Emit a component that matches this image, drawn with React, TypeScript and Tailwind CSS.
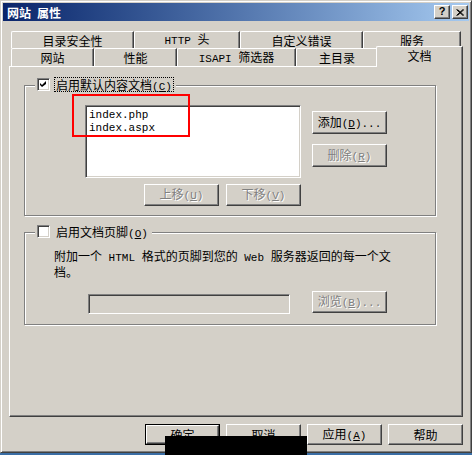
import type { ReactNode } from "react";

const mono = "font-['Liberation_Mono',monospace] text-[11px]";

// splits CJK and ascii runs so latin gets the narrow mono face
const Txt = ({ s }: { s: string }) => {
  const parts = s.match(/[\x00-\x7f]+|[^\x00-\x7f]+/g) ?? [];
  return (
    <>
      {parts.map((p, i) =>
        /^[\x00-\x7f]/.test(p) ? (
          <span key={i} className={mono}>
            {p}
          </span>
        ) : (
          <span key={i}>{p}</span>
        )
      )}
    </>
  );
};

const Key = ({ k, dots }: { k: string; dots?: boolean }) => (
  <span className={mono}>
    (<span className="underline">{k}</span>){dots ? "..." : ""}
  </span>
);

interface BtnProps {
  children: ReactNode;
  disabled?: boolean;
  isDefault?: boolean;
  size: string;
}

const Btn = ({ children, disabled, isDefault, size }: BtnProps) => {
  const face = (
    <div
      className={`flex h-full w-full items-center justify-center border border-t-white border-l-white border-r-[#404040] border-b-[#404040] shadow-[inset_-1px_-1px_0_#808080] ${
        disabled ? "text-[#808080] [text-shadow:1px_1px_0_#fff]" : "text-black"
      }`}
    >
      <span className="whitespace-nowrap">{children}</span>
    </div>
  );
  if (isDefault) {
    return <div className={`${size} shrink-0 border border-black`}>{face}</div>;
  }
  return <div className={`${size} shrink-0`}>{face}</div>;
};

const Check = ({ on }: { on?: boolean }) => (
  <div className="h-[13px] w-[13px] shrink-0 border border-t-[#808080] border-l-[#808080] border-r-white border-b-white bg-white shadow-[inset_1px_1px_0_#404040,inset_-1px_-1px_0_#d4d0c8]">
    {on && (
      <svg width="11" height="11" viewBox="0 0 11 11" className="block">
        <polygon points="2,4 4,6 8,2 8,5 4,8 2,6" fill="#000" />
      </svg>
    )}
  </div>
);

const Tab = ({ label, w }: { label: string; w: string }) => (
  <div
    className={`${w} flex h-full items-center justify-center rounded-tl-[2px] border-l border-t border-white border-r border-r-[#404040] shadow-[inset_-1px_0_0_#808080]`}
  >
    <span className="whitespace-nowrap">
      <Txt s={label} />
    </span>
  </div>
);

export default function App() {
  return (
    <div className="relative h-[455px] w-[472px] overflow-hidden bg-[#3a6ea5] font-['Noto_Sans_CJK_SC',sans-serif] text-[12px] leading-[13px] text-black">
      <div className="flex h-[453px] w-[472px] flex-col border border-[#d4d0c8] border-r-[#404040] border-b-[#404040] bg-[#d4d0c8] p-[2px] shadow-[inset_1px_1px_0_#fff,inset_-1px_-1px_0_#808080]">
        {/* title bar */}
        <div className="flex h-[18px] shrink-0 items-center bg-gradient-to-r from-[#0a246a] to-[#a6caf0] pl-[4px] pr-[1px]">
          <span className="font-bold text-white">网站</span>
          <span className="ml-[6px] font-bold text-white">属性</span>
          <div className="ml-auto flex gap-[2px]">
            <div className="h-[14px] w-[16px] border border-t-white border-l-white border-r-[#404040] border-b-[#404040] bg-[#d4d0c8] shadow-[inset_-1px_-1px_0_#808080]">
              <div className="flex h-full items-center justify-center pb-[1px] font-['Liberation_Sans',sans-serif] text-[11px] font-bold leading-none">
                ?
              </div>
            </div>
            <div className="flex h-[14px] w-[16px] items-center justify-center border border-t-white border-l-white border-r-[#404040] border-b-[#404040] bg-[#d4d0c8] shadow-[inset_-1px_-1px_0_#808080]">
              <svg width="8" height="7" viewBox="0 0 8 7" className="block">
                <path d="M0.5 0.5 L7 6.5 M1.5 0.5 L8 6.5 M7 0.5 L0.5 6.5 M8 0.5 L1.5 6.5" stroke="#000" strokeWidth="1" />
              </svg>
            </div>
          </div>
        </div>

        <div className="flex flex-1 flex-col px-[6px] pt-[10px]">
          {/* back row of tabs */}
          <div className="ml-[2px] flex h-[17px]">
            <Tab label="目录安全性" w="w-[123px]" />
            <Tab label="HTTP 头" w="w-[106px]" />
            <Tab label="自定义错误" w="w-[123px]" />
            <Tab label="服务" w="w-[98px]" />
          </div>
          {/* front row */}
          <div className="relative z-10 ml-[2px] flex h-[18px] items-end">
            <div className="flex h-[18px]">
              <Tab label="网站" w="w-[83px]" />
              <Tab label="性能" w="w-[83px]" />
              <Tab label="ISAPI 筛选器" w="w-[119px]" />
              <Tab label="主目录" w="w-[82px]" />
            </div>
            <div className="mb-[-1px] ml-[-2px] flex h-[21px] w-[87px] items-start justify-center rounded-tl-[2px] border-l border-t border-white border-r border-r-[#404040] bg-[#d4d0c8] pt-[2px] shadow-[inset_-1px_0_0_#808080]">
              文档
            </div>
          </div>

          {/* page */}
          <div className="h-[351px] border-l border-t border-white border-r border-b border-r-[#404040] border-b-[#404040] pl-[14px] pt-[18px] shadow-[inset_-1px_-1px_0_#808080]">
            {/* default documents group */}
            <div className="relative h-[131px] w-[412px] border border-[#808080] pl-[60px] pt-[19px] shadow-[inset_1px_1px_0_#fff,1px_1px_0_#fff]">
              <div className="absolute left-[10px] top-[-9px] flex h-[15px] items-center gap-[4px] bg-[#d4d0c8] px-[2px]">
                <Check on />
                <span className="h-[15px] border border-dotted border-black px-[1px] leading-[13px]">
                  启用默认内容文档<Key k="C" />
                </span>
              </div>

              <div className="flex">
                <div className="h-[73px] w-[216px] border border-t-[#808080] border-l-[#808080] border-r-white border-b-white bg-white pl-[3px] pt-[3px] shadow-[inset_1px_1px_0_#404040,inset_-1px_-1px_0_#d4d0c8]">
                  <div className="font-['Liberation_Mono',monospace] text-[11px] leading-[13px]">index.php</div>
                  <div className="font-['Liberation_Mono',monospace] text-[11px] leading-[13px]">index.aspx</div>
                </div>
                <div className="ml-[11px] flex flex-col gap-[10px] pt-[6px]">
                  <Btn size="h-[23px] w-[75px]">
                    添加<Key k="D" dots />
                  </Btn>
                  <Btn size="h-[23px] w-[75px]" disabled>
                    删除<Key k="R" />
                  </Btn>
                </div>
              </div>
              <div className="mt-[6px] flex w-[216px] justify-end gap-[7px]">
                <Btn size="h-[22px] w-[75px]" disabled>
                  上移<Key k="U" />
                </Btn>
                <Btn size="h-[22px] w-[75px]" disabled>
                  下移<Key k="V" />
                </Btn>
              </div>

              {/* red annotation */}
              <div className="pointer-events-none absolute left-[47px] top-[8px] h-[43px] w-[118px] border-2 border-[#ff0000]" />
            </div>

            {/* footer group */}
            <div className="relative mt-[16px] h-[93px] w-[412px] border border-[#808080] pl-[29px] pt-[16px] shadow-[inset_1px_1px_0_#fff,1px_1px_0_#fff]">
              <div className="absolute left-[10px] top-[-9px] flex h-[15px] items-center gap-[4px] bg-[#d4d0c8] px-[2px]">
                <Check />
                <span className="h-[15px] border border-transparent px-[1px] leading-[13px]">
                  启用文档页脚<Key k="O" />
                </span>
              </div>
              <p className="leading-[13px]">
                <Txt s="附加一个 HTML 格式的页脚到您的 Web 服务器返回的每一个文" />
                <br />
                档。
              </p>
              <div className="ml-[34px] mt-[13px] flex items-start">
                <div className="mt-[3px] h-[20px] w-[202px] border border-t-[#808080] border-l-[#808080] border-r-white border-b-white bg-[#d4d0c8] shadow-[inset_1px_1px_0_#404040,inset_-1px_-1px_0_#d4d0c8]" />
                <div className="ml-[22px]">
                  <Btn size="h-[22px] w-[75px]" disabled>
                    浏览<Key k="B" dots />
                  </Btn>
                </div>
              </div>
            </div>
          </div>

          {/* dialog buttons */}
          <div className="mt-[7px] flex justify-end gap-[6px]">
            <Btn size="h-[21px] w-[75px]" isDefault>
              确定
            </Btn>
            <Btn size="h-[21px] w-[75px]">取消</Btn>
            <Btn size="h-[21px] w-[75px]">
              应用<Key k="A" />
            </Btn>
            <Btn size="h-[21px] w-[75px]">帮助</Btn>
          </div>
        </div>
      </div>

      {/* redaction block */}
      <div className="absolute left-[165px] top-[436px] h-[19px] w-[142px] bg-black" />
    </div>
  );
}
